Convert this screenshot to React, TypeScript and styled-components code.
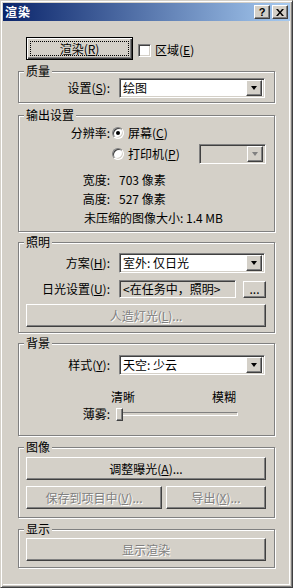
import React from "react";
import styled, { createGlobalStyle, css } from "styled-components";

const FACE = "#d4d0c8";
const SHADOW = "#808080";
const DARK = "#404040";

export default function App(): JSX.Element {
  return (
    <>
      <GlobalStyle />
      <Window>
        <TitleBar>
          <TitleText>渲染</TitleText>
          <CaptionButtons>
            <CaptionButton>?</CaptionButton>
            <CaptionButton>
              <svg width="8" height="7" viewBox="0 0 8 7">
                <path d="M0 0h2l2 2.5L6 0h2L5 3.5 8 7H6L4 4.5 2 7H0l3-3.5z" fill="#000" />
              </svg>
            </CaptionButton>
          </CaptionButtons>
        </TitleBar>

        <Client>
          <TopRow>
            <PushButton $default $width={107}>
              <FocusRect>
                渲染(<u>R</u>)
              </FocusRect>
            </PushButton>
            <CheckLabel>
              <CheckBox />
              <span>
                区域(<u>E</u>)
              </span>
            </CheckLabel>
          </TopRow>

          <Group $padTop={0} $padBottom={4} $mb={5}>
            <Legend>质量</Legend>
            <Field>
              <FieldLabel>
                设置(<u>S</u>):
              </FieldLabel>
              <Combo $width={146}>
                <ComboText>绘图</ComboText>
                <DropButton />
              </Combo>
            </Field>
          </Group>

          <Group $padTop={4} $padBottom={6} $mb={3}>
            <Legend>输出设置</Legend>
            <Field $height={14}>
              <FieldLabel $gap={2}>分辨率:</FieldLabel>
              <Radio $checked />
              <OptionText>
                屏幕(<u>C</u>)
              </OptionText>
            </Field>
            <Field $height={21} $top={3}>
              <FieldLabel $gap={2} />
              <Radio />
              <OptionText>
                打印机(<u>P</u>)
              </OptionText>
              <Combo $width={67} $disabled $push>
                <ComboText />
                <DropButton $disabled />
              </Combo>
            </Field>
            <Field $height={14} $top={9}>
              <FieldLabel>宽度:</FieldLabel>
              <Value>703 像素</Value>
            </Field>
            <Field $height={14} $top={5}>
              <FieldLabel>高度:</FieldLabel>
              <Value>527 像素</Value>
            </Field>
            <Field $height={14} $top={5} $indent={58}>
              <Value>未压缩的图像大小: 1.4 MB</Value>
            </Field>
          </Group>

          <Group $padTop={4} $padBottom={5} $mb={3}>
            <Legend>照明</Legend>
            <Field>
              <FieldLabel>
                方案(<u>H</u>):
              </FieldLabel>
              <Combo $width={146}>
                <ComboText>室外: 仅日光</ComboText>
                <DropButton />
              </Combo>
            </Field>
            <Field $height={18} $top={7}>
              <FieldLabel>
                日光设置(<u>U</u>):
              </FieldLabel>
              <ReadOnlyBox>&lt;在任务中，照明&gt;</ReadOnlyBox>
              <PushButton $width={23} $height={17} $push>
                ...
              </PushButton>
            </Field>
            <ButtonRow $top={6}>
              <PushButton $disabled $grow>
                人造灯光(<u>L</u>)...
              </PushButton>
            </ButtonRow>
          </Group>

          <Group $padTop={5} $padBottom={14} $mb={4}>
            <Legend>背景</Legend>
            <Field>
              <FieldLabel>
                样式(<u>Y</u>):
              </FieldLabel>
              <Combo $width={146}>
                <ComboText>天空: 少云</ComboText>
                <DropButton />
              </Combo>
            </Field>
            <ScaleRow>
              <span>清晰</span>
              <span>模糊</span>
            </ScaleRow>
            <Field $height={14} $top={3}>
              <FieldLabel $gap={6}>薄雾:</FieldLabel>
              <Slider>
                <SliderTrack />
                <SliderThumb style={{ left: 0 }} />
              </Slider>
            </Field>
          </Group>

          <Group $padTop={3} $padBottom={8} $mb={4}>
            <Legend>图像</Legend>
            <ButtonRow>
              <PushButton $grow>
                调整曝光(<u>A</u>)...
              </PushButton>
            </ButtonRow>
            <ButtonRow $top={6}>
              <PushButton $disabled $width={136}>
                保存到项目中(<u>V</u>)...
              </PushButton>
              <PushButton $disabled $grow>
                导出(<u>X</u>)...
              </PushButton>
            </ButtonRow>
          </Group>

          <Group $padTop={2} $padBottom={6} $mb={0}>
            <Legend>显示</Legend>
            <ButtonRow>
              <PushButton $disabled $grow>
                显示渲染
              </PushButton>
            </ButtonRow>
          </Group>
        </Client>
      </Window>
    </>
  );
}

const GlobalStyle = createGlobalStyle`
  html, body {
    margin: 0;
    padding: 0;
    background: ${FACE};
  }
  body {
    font-family: "Noto Sans CJK SC", "Noto Sans", sans-serif;
    font-size: 12px;
    color: #000;
  }
  u {
    text-decoration-thickness: 1px;
    text-underline-offset: 1px;
  }
`;

const raised = css`
  border: 1px solid;
  border-color: #fff ${DARK} ${DARK} #fff;
  box-shadow: inset -1px -1px 0 ${SHADOW}, inset 1px 1px 0 ${FACE};
`;

const sunken = css`
  border: 1px solid;
  border-color: ${SHADOW} #fff #fff ${SHADOW};
  box-shadow: inset 1px 1px 0 ${DARK}, inset -1px -1px 0 ${FACE};
`;

const Window = styled.div`
  width: 293px;
  height: 588px;
  box-sizing: border-box;
  background: ${FACE};
  border: 1px solid;
  border-color: ${FACE} ${DARK} ${DARK} ${FACE};
  box-shadow: inset 1px 1px 0 #fff, inset -1px -1px 0 ${SHADOW};
  padding: 2px;
  display: flex;
  flex-direction: column;
`;

const TitleBar = styled.div`
  height: 18px;
  flex: none;
  display: flex;
  align-items: center;
  justify-content: space-between;
  padding: 0 2px 0 2px;
  background: linear-gradient(to right, #0a246a, #a6caf0);
`;

const TitleText = styled.div`
  color: #fff;
  font-weight: bold;
  font-size: 12px;
  line-height: 14px;
  letter-spacing: 1px;
`;

const CaptionButtons = styled.div`
  display: flex;
  gap: 2px;
`;

const CaptionButton = styled.div`
  ${raised};
  width: 16px;
  height: 14px;
  box-sizing: border-box;
  background: ${FACE};
  display: flex;
  align-items: center;
  justify-content: center;
  font-family: "Liberation Sans", Arial, sans-serif;
  font-weight: bold;
  font-size: 11px;
  line-height: 1;
`;

const Client = styled.div`
  flex: 1;
  display: flex;
  flex-direction: column;
  padding: 16px 0 0 15px;
  box-shadow: inset -1px -1px 0 #fff;
`;

const TopRow = styled.div`
  display: flex;
  align-items: center;
  padding-left: 8px;
  margin-bottom: 4px;
`;

const PushButton = styled.div<{
  $default?: boolean;
  $disabled?: boolean;
  $width?: number;
  $height?: number;
  $grow?: boolean;
  $push?: boolean;
}>`
  box-sizing: border-box;
  width: ${({ $width }) => ($width ? `${$width}px` : "auto")};
  height: ${({ $height }) => $height || 23}px;
  flex: ${({ $grow }) => ($grow ? "1" : "none")};
  margin-left: ${({ $push }) => ($push ? "auto" : "0")};
  background: ${FACE};
  display: flex;
  align-items: center;
  justify-content: center;
  line-height: 14px;
  white-space: nowrap;
  ${({ $default }) =>
    $default
      ? css`
          border: 1px solid #000;
          box-shadow: inset 1px 1px 0 #fff, inset -1px -1px 0 ${DARK},
            inset -2px -2px 0 ${SHADOW};
          padding: 3px;
        `
      : raised};
  color: ${({ $disabled }) => ($disabled ? SHADOW : "#000")};
  text-shadow: ${({ $disabled }) => ($disabled ? "1px 1px 0 #fff" : "none")};
`;

const FocusRect = styled.div`
  flex: 1;
  align-self: stretch;
  display: flex;
  align-items: center;
  justify-content: center;
  border: 1px dotted #000;
`;

const CheckLabel = styled.label`
  display: flex;
  align-items: center;
  gap: 4px;
  margin-left: 5px;
  margin-top: 3px;
  line-height: 14px;
`;

const CheckBox = styled.span`
  ${sunken};
  display: block;
  width: 13px;
  height: 13px;
  box-sizing: border-box;
  background: #fff;
`;

const Group = styled.fieldset<{ $padTop: number; $padBottom: number; $mb: number }>`
  width: 257px;
  box-sizing: border-box;
  margin: 0 0 ${({ $mb }) => $mb}px 0;
  padding: ${({ $padTop }) => $padTop}px 8px ${({ $padBottom }) => $padBottom}px 7px;
  border: 1px solid ${SHADOW};
  box-shadow: 1px 1px 0 #fff, inset 1px 1px 0 #fff;
  min-inline-size: 0;
  display: flex;
  flex-direction: column;
`;

const Legend = styled.legend`
  margin-left: -2px;
  padding: 0 2px;
  line-height: 14px;
  background: ${FACE};
`;

const Field = styled.div<{ $height?: number; $top?: number; $indent?: number }>`
  display: flex;
  align-items: center;
  height: ${({ $height }) => ($height ? `${$height}px` : "auto")};
  margin-top: ${({ $top }) => $top || 0}px;
  padding-left: ${({ $indent }) => $indent || 0}px;
  line-height: 14px;
  white-space: nowrap;
`;

const FieldLabel = styled.div<{ $gap?: number }>`
  width: 84px;
  flex: none;
  text-align: right;
  margin-right: ${({ $gap }) => ($gap === undefined ? 9 : $gap)}px;
`;

const Value = styled.div`
  white-space: pre;
`;

const OptionText = styled.span`
  margin-left: 4px;
`;

const Combo = styled.div<{ $width: number; $disabled?: boolean; $push?: boolean }>`
  ${sunken};
  box-sizing: border-box;
  width: ${({ $width }) => $width}px;
  height: 20px;
  margin-left: ${({ $push }) => ($push ? "auto" : "0")};
  background: ${({ $disabled }) => ($disabled ? FACE : "#fff")};
  display: flex;
  align-items: center;
  padding: 2px;
`;

const ComboText = styled.div`
  flex: 1;
  padding-left: 1px;
  line-height: 14px;
  white-space: nowrap;
`;

const DropButton = styled.div<{ $disabled?: boolean }>`
  ${raised};
  box-sizing: border-box;
  width: 16px;
  height: 16px;
  background: ${FACE};
  display: flex;
  align-items: center;
  justify-content: center;
  &::after {
    content: "";
    width: 0;
    height: 0;
    border-left: 3.5px solid transparent;
    border-right: 3.5px solid transparent;
    border-top: 4px solid ${({ $disabled }) => ($disabled ? SHADOW : "#000")};
  }
`;

const Radio = styled.span<{ $checked?: boolean }>`
  display: flex;
  align-items: center;
  justify-content: center;
  width: 12px;
  height: 12px;
  box-sizing: border-box;
  border-radius: 50%;
  background: #fff;
  border: 1px solid;
  border-color: ${SHADOW} #fff #fff ${SHADOW};
  box-shadow: inset 1px 1px 0 ${DARK}, inset -1px -1px 0 ${FACE};
  &::after {
    content: "";
    display: ${({ $checked }) => ($checked ? "block" : "none")};
    width: 4px;
    height: 4px;
    border-radius: 50%;
    background: #000;
  }
`;

const ReadOnlyBox = styled.div`
  ${sunken};
  box-sizing: border-box;
  width: 117px;
  height: 18px;
  padding: 0 3px;
  display: flex;
  align-items: center;
  background: ${FACE};
  white-space: nowrap;
`;

const ButtonRow = styled.div<{ $top?: number }>`
  display: flex;
  gap: 4px;
  margin-top: ${({ $top }) => $top || 0}px;
`;

const ScaleRow = styled.div`
  display: flex;
  justify-content: space-between;
  width: 125px;
  margin: 15px 0 0 85px;
  line-height: 14px;
`;

const Slider = styled.div`
  position: relative;
  width: 122px;
  height: 13px;
  display: flex;
  align-items: center;
`;

const SliderTrack = styled.div`
  ${sunken};
  box-sizing: border-box;
  width: 100%;
  height: 4px;
  box-shadow: none;
`;

const SliderThumb = styled.div`
  ${raised};
  position: absolute;
  top: 0;
  box-sizing: border-box;
  width: 7px;
  height: 13px;
  background: ${FACE};
`;
